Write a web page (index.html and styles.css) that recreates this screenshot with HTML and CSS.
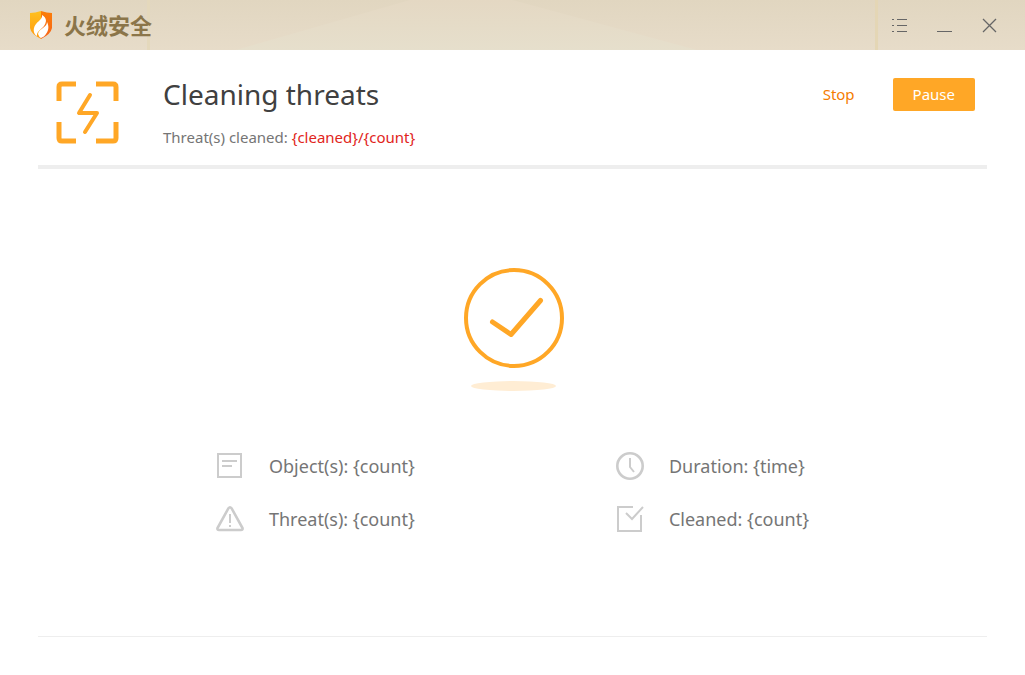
FILE: index.html
```html
<!DOCTYPE html>
<html lang="en">
<head>
    <meta charset="UTF-8">
    <meta name="viewport" content="width=device-width, initial-scale=1.0">
    <title>火绒安全</title>
    <link rel="stylesheet" href="styles.css">
</head>
<body>
    <header class="titlebar">
        <div class="brand">
            <svg class="brand-logo" width="24" height="28" viewBox="0 0 24 28" aria-hidden="true">
                <defs>
                    <linearGradient id="shield-left" x1="0" y1="0" x2="0" y2="1">
                        <stop offset="0" stop-color="#ffc01e"/>
                        <stop offset="1" stop-color="#ff9a10"/>
                    </linearGradient>
                    <linearGradient id="shield-right" x1="0" y1="0" x2="0" y2="1">
                        <stop offset="0" stop-color="#fb7e08"/>
                        <stop offset="1" stop-color="#f8641a"/>
                    </linearGradient>
                </defs>
                <path d="M12 0 Q6 2 1 2 V17 Q2 23 12 28 Z" fill="url(#shield-left)"/>
                <path d="M12 0 Q18 2 23 2 V17 Q22 23 12 28 Z" fill="url(#shield-right)"/>
                <path d="M13 4 C14 9 6 11 5 17 C4 21 6 24 8 25 C7 19 16 18 17 10 C17 7 15 5 13 4 Z" fill="#fff"/>
                <path d="M18 11 C18 17 10 17 9 23 Q10 26 12 27 C14 26 16 25 17 23 C20 19 20 15 18 11 Z" fill="#fff"/>
            </svg>
            <span class="brand-name">火绒安全</span>
        </div>
        <div class="window-controls">
            <button class="window-btn" type="button" aria-label="Menu">
                <svg width="17" height="17" viewBox="0 0 17 17" shape-rendering="crispEdges">
                    <path d="M1 2.5h2M6 2.5h10M1 8.5h2M6 8.5h10M1 14.5h2M6 14.5h10"/>
                </svg>
            </button>
            <button class="window-btn" type="button" aria-label="Minimize">
                <svg width="17" height="17" viewBox="0 0 17 17" shape-rendering="crispEdges">
                    <path d="M1 14.5h15"/>
                </svg>
            </button>
            <button class="window-btn" type="button" aria-label="Close">
                <svg width="17" height="17" viewBox="0 0 17 17">
                    <path d="M2 2l13 13M15 2l-13 13" stroke-width="1.3"/>
                </svg>
            </button>
        </div>
    </header>

    <main class="content">
        <section class="task">
            <svg class="task-icon" width="64" height="64" viewBox="0 0 64 64" aria-hidden="true">
                <g fill="none" stroke="#ffa726" stroke-width="5">
                    <path d="M20 3H6Q3 3 3 6V20M40 3H57Q60 3 60 6V20M20 60H6Q3 60 3 57V41M40 60H57Q60 60 60 57V41"/>
                    <path d="M34 14L23 32H41L29 51" stroke-width="4" stroke-linecap="round" stroke-linejoin="round"/>
                </g>
            </svg>
            <div class="task-info">
                <h1>Cleaning threats</h1>
                <p>Threat(s) cleaned: <span class="progress">{cleaned}/{count}</span></p>
            </div>
            <div class="task-actions">
                <button class="btn-link" type="button">Stop</button>
                <button class="btn" type="button">Pause</button>
            </div>
        </section>

        <section class="result">
            <svg class="result-icon" width="102" height="124" viewBox="0 0 102 124" aria-hidden="true">
                <g fill="none" stroke="#ffa726">
                    <circle cx="52" cy="50" r="48" stroke-width="4"/>
                    <path d="M30.5 54L49 66.500L78.500 32.500" stroke-width="5" stroke-linecap="round" stroke-linejoin="round"/>
                </g>
                <ellipse cx="51.500" cy="118" rx="42.500" ry="5" fill="#ffedd4"/>
            </svg>
            <ul class="stats">
                <li>
                    <svg width="28" height="28" viewBox="0 0 28 28" aria-hidden="true">
                        <path d="M2 2H25V25H2ZM6 9H21M6 14H16"/>
                    </svg>
                    <span>Object(s): {count}</span>
                </li>
                <li>
                    <svg width="28" height="28" viewBox="0 0 28 28" aria-hidden="true">
                        <circle cx="14" cy="14" r="12.700" stroke-width="2.600"/>
                        <path d="M14 6V15L18 20"/>
                    </svg>
                    <span>Duration: {time}</span>
                </li>
                <li>
                    <svg width="28" height="28" viewBox="0 0 28 28" aria-hidden="true">
                        <path d="M12.500 3.200Q14 1.200 15.500 3.200L26.500 23Q27 25 25 25H3Q1 25 1.500 23Z" stroke-width="2.600"/>
                        <path d="M14 9V18M14 20V22" stroke-width="2"/>
                    </svg>
                    <span>Threat(s): {count}</span>
                </li>
                <li>
                    <svg width="28" height="28" viewBox="0 0 28 28" aria-hidden="true">
                        <path d="M17 2H2V26H25V10M10 8L16 14L27 2"/>
                    </svg>
                    <span>Cleaned: {count}</span>
                </li>
            </ul>
        </section>
    </main>
</body>
</html>
```

FILE: styles.css
```css
* {
    box-sizing: border-box;
}

body {
    display: flex;
    flex-direction: column;
    min-height: 100vh;
    margin: 0;
    background-color: #fff;
    color: #757575;
    font-family: "Noto Sans", "Noto Sans CJK SC", sans-serif;
    font-size: 15px;
}

button {
    padding: 0;
    border: none;
    background: none;
    font: inherit;
    cursor: pointer;
}

/* title bar */
.titlebar {
    position: relative;
    display: flex;
    justify-content: space-between;
    align-items: center;
    height: 50px;
    padding: 0 27px 0 29px;
    background: linear-gradient(#e1d6c0, #e7dcc9);
}

/* light beam behind the controls */
.titlebar::before {
    content: "";
    position: absolute;
    inset: 0;
    background: linear-gradient(#e4d8c3, #e6dfcc);
    clip-path: polygon(40% 0, 50% 0, 68% 100%, 23% 100%);
}

.brand {
    position: relative;
    display: flex;
    align-items: center;
    gap: 11px;
    height: 100%;
    width: 121px;
    border-right: 3px solid #e4d8bc;
}

.brand-logo {
    flex: none;
}

.brand-name {
    color: #8b7549;
    font-family: "Noto Sans CJK SC", sans-serif;
    font-size: 22px;
    font-weight: 700;
    line-height: 28px;
    padding-bottom: 2px;
    white-space: nowrap;
}

.window-controls {
    position: relative;
    display: flex;
    align-items: center;
    gap: 28px;
    height: 100%;
    padding-left: 13px;
    border-left: 3px solid #e4d6b5;
}

.window-btn {
    display: flex;
}

.window-btn svg {
    fill: none;
    stroke: #666;
}

/* current task */
.content {
    flex: 1;
    display: flex;
    flex-direction: column;
    padding: 0 38px 38px;
}

.task {
    display: flex;
    align-items: flex-start;
    padding: 24px 12px 17px 18px;
    border-bottom: 4px solid #eee;
}

.task-icon {
    flex: none;
    margin-top: 7px;
}

.task-info {
    flex: 1;
    margin-left: 43px;
}

h1 {
    margin: 0;
    color: #404040;
    font-size: 28px;
    font-weight: 400;
    line-height: 40px;
}

.task-info p {
    margin: 12px 0 0;
    line-height: 22px;
}

.progress {
    color: #e1251b;
}

.task-actions {
    display: flex;
    align-items: center;
    gap: 38px;
    padding-top: 4px;
}

.btn-link,
.btn {
    height: 33px;
    padding-bottom: 2px;
}

.btn-link {
    color: #f57c00;
}

.btn {
    padding-left: 20px;
    padding-right: 20px;
    border-radius: 2px;
    background-color: #ffa726;
    color: #fff;
}

/* result */
.result {
    flex: 1;
    display: flex;
    flex-direction: column;
    align-items: center;
    gap: 60px;
    padding-top: 99px;
    border-bottom: 1px solid #eee;
}

.stats {
    display: grid;
    grid-template-columns: 400px auto;
    justify-content: center;
    row-gap: 25px;
    margin: 0;
    padding: 0;
    list-style: none;
    font-size: 18px;
    line-height: 28px;
}

.stats li {
    display: flex;
    align-items: center;
    gap: 25px;
}

.stats svg {
    flex: none;
    fill: none;
    stroke: #ccc;
    stroke-width: 2;
}
```
